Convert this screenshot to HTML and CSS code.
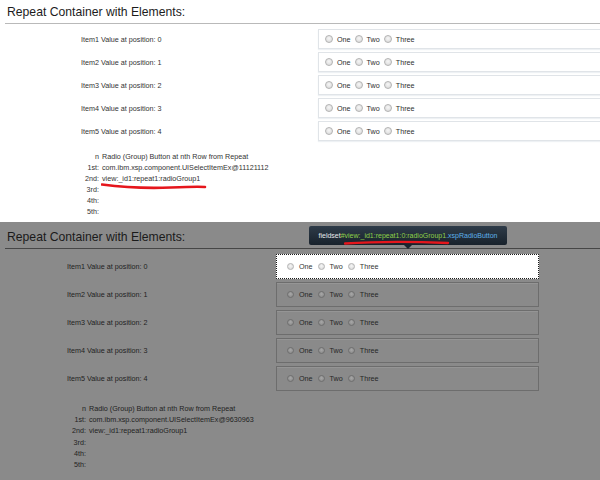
FILE: index.html
```html
<!DOCTYPE html>
<html>
<head>
<meta charset="utf-8">
<link rel="stylesheet" href="styles.css">
</head>
<body>
<section class="shot shot-top">
  <h2 class="title">Repeat Container with Elements:</h2>
  <div class="rows">
    <div class="row"><span class="lbl">Item1 Value at position: 0</span><div class="grp"><input class="radio" type="radio"><span class="opt">One</span><input class="radio" type="radio"><span class="opt">Two</span><input class="radio" type="radio"><span class="opt">Three</span></div></div>
    <div class="row"><span class="lbl">Item2 Value at position: 1</span><div class="grp"><input class="radio" type="radio"><span class="opt">One</span><input class="radio" type="radio"><span class="opt">Two</span><input class="radio" type="radio"><span class="opt">Three</span></div></div>
    <div class="row"><span class="lbl">Item3 Value at position: 2</span><div class="grp"><input class="radio" type="radio"><span class="opt">One</span><input class="radio" type="radio"><span class="opt">Two</span><input class="radio" type="radio"><span class="opt">Three</span></div></div>
    <div class="row"><span class="lbl">Item4 Value at position: 3</span><div class="grp"><input class="radio" type="radio"><span class="opt">One</span><input class="radio" type="radio"><span class="opt">Two</span><input class="radio" type="radio"><span class="opt">Three</span></div></div>
    <div class="row"><span class="lbl">Item5 Value at position: 4</span><div class="grp"><input class="radio" type="radio"><span class="opt">One</span><input class="radio" type="radio"><span class="opt">Two</span><input class="radio" type="radio"><span class="opt">Three</span></div></div>
  </div>
  <dl class="list">
    <dt>n</dt><dd>Radio (Group) Button at nth Row from Repeat</dd>
    <dt>1st:</dt><dd>com.ibm.xsp.component.UISelectItemEx@11121112</dd>
    <dt>2nd:</dt><dd><span class="marked">view:_id1:repeat1:radioGroup1<svg class="scribble" width="106" height="8" viewBox="0 0 106 8"><path d="M1 2.5 C 20 5, 45 6.5, 70 5.5 S 98 4.5, 104 5" fill="none" stroke="#e5161c" stroke-width="2.6" stroke-linecap="round"/></svg></span></dd>
    <dt>3rd:</dt><dd></dd>
    <dt>4th:</dt><dd></dd>
    <dt>5th:</dt><dd></dd>
  </dl>
</section>
<section class="shot shot-bottom">
  <h2 class="title">Repeat Container with Elements:</h2>
  <div class="tip">
    <span class="tip-tag">fieldset</span><span class="tip-id">#view:_id1:repeat1:0:radioGroup1</span><span class="tip-cls">.xspRadioButton</span>
    <svg class="tip-scribble" width="106" height="6" viewBox="0 0 106 6"><path d="M1 3.5 C 30 1.5, 70 1.5, 104 3" fill="none" stroke="#e5161c" stroke-width="2.4" stroke-linecap="round"/></svg>
  </div>
  <div class="rows">
    <div class="row"><span class="lbl">Item1 Value at position: 0</span><div class="grp hl"><input class="radio" type="radio"><span class="opt">One</span><input class="radio" type="radio"><span class="opt">Two</span><input class="radio" type="radio"><span class="opt">Three</span></div></div>
    <div class="row"><span class="lbl">Item2 Value at position: 1</span><div class="grp"><input class="radio" type="radio"><span class="opt">One</span><input class="radio" type="radio"><span class="opt">Two</span><input class="radio" type="radio"><span class="opt">Three</span></div></div>
    <div class="row"><span class="lbl">Item3 Value at position: 2</span><div class="grp"><input class="radio" type="radio"><span class="opt">One</span><input class="radio" type="radio"><span class="opt">Two</span><input class="radio" type="radio"><span class="opt">Three</span></div></div>
    <div class="row"><span class="lbl">Item4 Value at position: 3</span><div class="grp"><input class="radio" type="radio"><span class="opt">One</span><input class="radio" type="radio"><span class="opt">Two</span><input class="radio" type="radio"><span class="opt">Three</span></div></div>
    <div class="row"><span class="lbl">Item5 Value at position: 4</span><div class="grp"><input class="radio" type="radio"><span class="opt">One</span><input class="radio" type="radio"><span class="opt">Two</span><input class="radio" type="radio"><span class="opt">Three</span></div></div>
  </div>
  <dl class="list">
    <dt>n</dt><dd>Radio (Group) Button at nth Row from Repeat</dd>
    <dt>1st:</dt><dd>com.ibm.xsp.component.UISelectItemEx@9630963</dd>
    <dt>2nd:</dt><dd>view:_id1:repeat1:radioGroup1</dd>
    <dt>3rd:</dt><dd></dd>
    <dt>4th:</dt><dd></dd>
    <dt>5th:</dt><dd></dd>
  </dl>
</section>
</body>
</html>
```
FILE: styles.css
```css
* { box-sizing: border-box; }

body {
  margin: 0;
  width: 600px;
  height: 480px;
  overflow: hidden;
  font-family: "Liberation Sans", Arial, sans-serif;
}

.shot {
  position: relative;
  overflow: hidden;
}

.shot-top {
  height: 222px;
  background: #fff;
  color: #333;
}

.shot-bottom {
  height: 258px;
  background: #8a8a8a;
  color: #222;
}

.title {
  margin: 0 0 0 5px;
  padding: 2px 0 0 2px;
  font-size: 12.2px;
  font-weight: normal;
  line-height: 21px;
  color: #1c1c1c;
  border-bottom: 1px solid #b9b9b9;
}

.shot-bottom .title {
  padding-top: 5px;
  color: #1a1a1a;
  border-bottom-color: #464646;
}

.rows {
  display: flex;
  flex-direction: column;
  gap: 3px;
  margin-top: 5px;
}

.row {
  display: flex;
  align-items: center;
  height: 20px;
  font-size: 7.2px;
}

.lbl {
  flex: none;
  width: 318px;
  padding-left: 81px;
}

.grp {
  flex: none;
  width: 300px;
  height: 20px;
  display: flex;
  align-items: center;
  padding-left: 6px;
  background: #fff;
  border: 1px solid #e0e4e8;
  box-shadow: 0 1px 1px #eef1f4;
}

.radio {
  appearance: none;
  -webkit-appearance: none;
  flex: none;
  width: 8px;
  height: 8px;
  margin: 0 4px 0 0;
  border: 1px solid #b3b3b3;
  border-radius: 50%;
  background: radial-gradient(circle at 50% 40%, #f6f6f6 0%, #d6d6d6 100%);
}

.opt {
  margin-right: 4px;
  color: #2e2e2e;
}

.shot-bottom .rows { margin-top: 5px; }

.shot-bottom .row { height: 25px; }

.shot-bottom .lbl {
  width: 276px;
  padding-left: 67px;
}

.shot-bottom .grp {
  width: 263px;
  height: 25px;
  padding-left: 10px;
  background: transparent;
  border: 1px solid #6d6d6d;
  box-shadow: inset 0 1px 0 #959595;
}

.shot-bottom .grp.hl {
  background: #fff;
  border: 1px dotted #1a1a1a;
  box-shadow: none;
}

.shot-bottom .radio {
  width: 7px;
  height: 7px;
  margin-right: 5px;
  border-color: #6e6e6e;
  background: radial-gradient(circle at 50% 40%, #a8a8a8 0%, #848484 100%);
}

.shot-bottom .grp.hl .radio {
  border-color: #b3b3b3;
  background: radial-gradient(circle at 50% 40%, #f6f6f6 0%, #d6d6d6 100%);
}

.shot-bottom .opt {
  margin-right: 5px;
  color: #262626;
}

.shot-bottom .grp.hl .opt { color: #333; }

.list {
  display: grid;
  grid-template-columns: 99px auto;
  column-gap: 3px;
  margin: 10px 0 0;
  font-size: 7.2px;
  line-height: 11px;
}

.list dt { text-align: right; }

.list dd {
  margin: 0;
  min-height: 11px;
}

.shot-bottom .list {
  grid-template-columns: 86px auto;
  margin-top: 12px;
  line-height: 11.2px;
}

.marked { position: relative; }

.scribble {
  position: absolute;
  left: -1px;
  top: 8px;
}

.tip {
  position: absolute;
  left: 309px;
  top: 4px;
  width: 198px;
  height: 19px;
  border-radius: 2px;
  background: linear-gradient(#2e3b48, #18222c);
  font-size: 7px;
  line-height: 19px;
  text-align: center;
  white-space: nowrap;
}

.tip::after {
  content: "";
  position: absolute;
  left: 95px;
  top: 19px;
  border-left: 4px solid transparent;
  border-right: 4px solid transparent;
  border-top: 4px solid #1b252f;
}

.tip-tag { color: #e6e9ec; }
.tip-id { color: #8ed04a; }
.tip-cls { color: #5fb2ea; }

.tip-scribble {
  position: absolute;
  left: 35px;
  top: 14px;
}
```
